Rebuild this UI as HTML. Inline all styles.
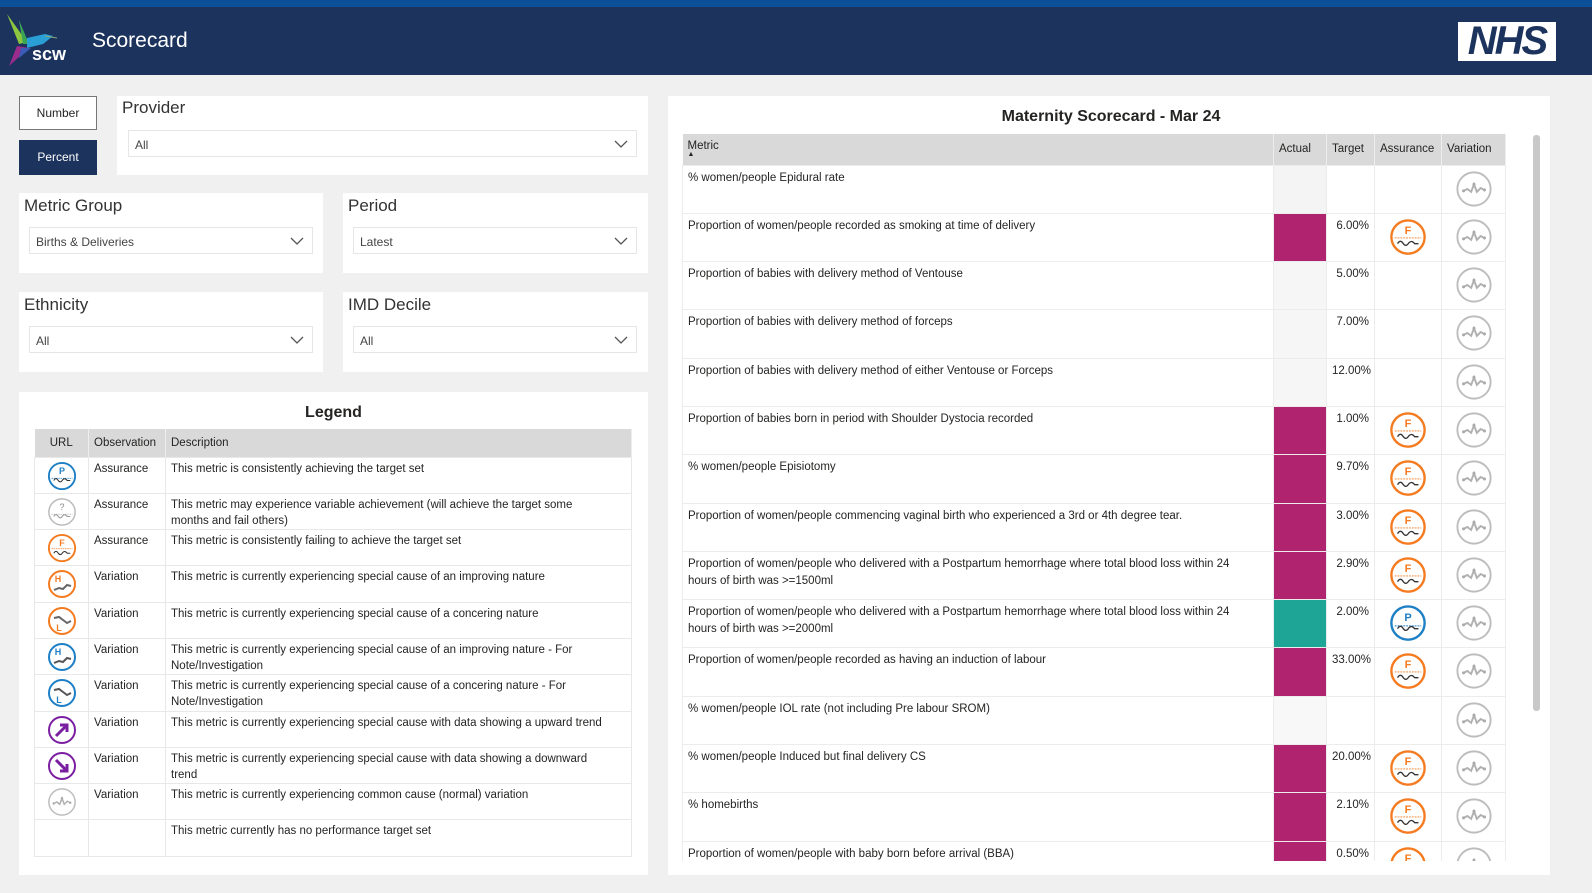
<!DOCTYPE html>
<html><head><meta charset="utf-8"><style>
*{box-sizing:border-box;margin:0;padding:0}
body{width:1592px;height:893px;background:#f0f0f0;font-family:"Liberation Sans",sans-serif;position:relative;overflow:hidden;color:#252423}
.abs{position:absolute}
.card{position:absolute;background:#fff}
.lbl{position:absolute;font-size:17px;color:#333}
.dd{position:absolute;background:#fff;border:1px solid #e6e6e6;font-size:12px;color:#444;padding:7px 6px}
.dd svg{position:absolute;right:8px;top:9px}
table{border-collapse:collapse;font-size:11.5px;table-layout:fixed}
.lg tr{height:36.3px}
.lg td{border:1px solid #e8e8e8;vertical-align:top;padding:3px 5px 0;line-height:16px;overflow:hidden}
.lg td svg{display:block;margin:0 auto}
.lg th{background:#d9d9d9;font-weight:normal;text-align:left;padding:0 5px;height:28px;border-right:1px solid #eee}
.mt tr{height:48.3px}
.mt td{border:1px solid #ececec;vertical-align:top;padding:4px 5px 0;line-height:17px;overflow:hidden}
.mt td svg{display:block;margin:0 auto}
.mt th{background:#d9d9d9;font-weight:normal;text-align:left;padding:0 5px;height:30px;border-right:1px solid #eee}
.r{text-align:right}
.c{text-align:center}
</style></head><body>
<svg width="0" height="0" style="position:absolute"><defs>
<symbol id="var" viewBox="0 0 40 40"><circle cx="20" cy="20" r="17.5" fill="#fff" stroke="#bdbdbd" stroke-width="2"/><path d="M9 22 L13 20 L17 23 L20 15 L23 23 L27 19 L31 21" fill="none" stroke="#b0b0b0" stroke-width="2"/><circle cx="9" cy="22" r="1.6" fill="#aaa"/><circle cx="20" cy="15" r="1.6" fill="#aaa"/><circle cx="31" cy="21" r="1.6" fill="#aaa"/></symbol>
<symbol id="fo" viewBox="0 0 40 40"><circle cx="20" cy="20" r="17.5" fill="#fff" stroke="#f47b20" stroke-width="2.5"/><line x1="6" y1="21" x2="34" y2="21" stroke="#f47b20" stroke-width="1" stroke-dasharray="2 1"/><path d="M9 27 q3 -5 6 0 q3 4 6 -1 q3 -3 6 1 h4" fill="none" stroke="#333" stroke-width="1.4"/></symbol>
<symbol id="pb" viewBox="0 0 40 40"><circle cx="20" cy="20" r="17.5" fill="#fff" stroke="#1d7fc5" stroke-width="2.5"/><line x1="6" y1="23" x2="34" y2="23" stroke="#1d7fc5" stroke-width="1" stroke-dasharray="2 1"/><path d="M9 26 q3 -5 6 0 q3 4 6 -1 q3 -3 6 1 h4" fill="none" stroke="#333" stroke-width="1.4"/></symbol>
<symbol id="qg" viewBox="0 0 40 40"><circle cx="20" cy="20" r="17.5" fill="#fff" stroke="#bbb" stroke-width="2"/><line x1="6" y1="23" x2="34" y2="23" stroke="#bbb" stroke-width="1" stroke-dasharray="2 1"/><path d="M9 26 q3 -5 6 0 q3 4 6 -1 q3 -3 6 1 h4" fill="none" stroke="#999" stroke-width="1.4"/></symbol>
</defs></svg>

<div class="abs" style="left:0;top:0;width:1592px;height:7px;background:#0a4f97"></div>
<div class="abs" style="left:0;top:7px;width:1592px;height:68px;background:#1c335e"></div>
<svg class="abs" style="left:5px;top:14px" width="60" height="55" viewBox="0 0 60 55"><polygon points="2,0 22,28 14,30" fill="#8cc63f"/><polygon points="14,6 24,30 18,30" fill="#3aa655"/><polygon points="22,24 40,20 48,22 38,30 22,34" fill="#2a9fd6"/><polygon points="12,32 24,34 4,52" fill="#9b2c8c"/><polygon points="16,34 26,34 14,44" fill="#3a5bb7"/><line x1="40" y1="22" x2="52" y2="24" stroke="#8a7" stroke-width="1"/></svg>
<div class="abs" style="left:32px;top:44px;color:#fff;font-size:18px;font-weight:bold">scw</div>
<div class="abs" style="left:92px;top:29px;color:#fff;font-size:21px">Scorecard</div>
<div class="abs" style="left:1458px;top:22px;width:98px;height:39px;background:#fff;"></div>
<div class="abs" style="left:1461px;top:25px;width:92px;height:33px;background:#fff;color:#1c335e;font-size:40px;font-weight:bold;font-style:italic;line-height:33px;letter-spacing:-2px;text-align:center">NHS</div>

<div class="abs" style="left:19px;top:96px;width:78px;height:34px;background:#fff;border:1px solid #777;font-size:12px;text-align:center;line-height:32px">Number</div>
<div class="abs" style="left:19px;top:140px;width:78px;height:35px;background:#1c335e;color:#fff;font-size:12px;text-align:center;line-height:35px">Percent</div>

<div class="card" style="left:117px;top:96px;width:531px;height:79px"></div>
<div class="lbl" style="left:122px;top:98px">Provider</div>
<div class="dd" style="left:128px;top:130px;width:509px;height:27px">All<svg width="14" height="8"><path d="M1 1 L7 7 L13 1" fill="none" stroke="#555" stroke-width="1.3"/></svg></div>

<div class="card" style="left:19px;top:193px;width:304px;height:80px"></div>
<div class="lbl" style="left:24px;top:196px">Metric Group</div>
<div class="dd" style="left:29px;top:227px;width:284px;height:27px">Births &amp; Deliveries<svg width="14" height="8"><path d="M1 1 L7 7 L13 1" fill="none" stroke="#555" stroke-width="1.3"/></svg></div>
<div class="card" style="left:343px;top:193px;width:305px;height:80px"></div>
<div class="lbl" style="left:348px;top:196px">Period</div>
<div class="dd" style="left:353px;top:227px;width:284px;height:27px">Latest<svg width="14" height="8"><path d="M1 1 L7 7 L13 1" fill="none" stroke="#555" stroke-width="1.3"/></svg></div>

<div class="card" style="left:19px;top:292px;width:304px;height:80px"></div>
<div class="lbl" style="left:24px;top:295px">Ethnicity</div>
<div class="dd" style="left:29px;top:326px;width:284px;height:27px">All<svg width="14" height="8"><path d="M1 1 L7 7 L13 1" fill="none" stroke="#555" stroke-width="1.3"/></svg></div>
<div class="card" style="left:343px;top:292px;width:305px;height:80px"></div>
<div class="lbl" style="left:348px;top:295px">IMD Decile</div>
<div class="dd" style="left:353px;top:326px;width:284px;height:27px">All<svg width="14" height="8"><path d="M1 1 L7 7 L13 1" fill="none" stroke="#555" stroke-width="1.3"/></svg></div>

<div class="card" style="left:19px;top:392px;width:629px;height:483px"></div>
<div class="abs" style="left:19px;top:404px;width:629px;text-align:center;font-size:16px;font-weight:bold">Legend</div>
<table class="lg abs" style="left:34px;top:429px;width:598px">
<tr style="height:28px"><th style="width:54px;text-align:center">URL</th><th style="width:77px">Observation</th><th style="padding-right:30px">Description</th></tr>
<tr><td><svg width="30" height="30"><use href="#pb"/><text x="15" y="13" font-size="9" fill="#1d7fc5" text-anchor="middle" font-weight="bold">P</text></svg></td><td>Assurance</td><td>This metric is consistently achieving the target set</td></tr>
<tr><td><svg width="30" height="30"><use href="#qg"/><text x="15" y="13" font-size="9" fill="#888" text-anchor="middle">?</text></svg></td><td>Assurance</td><td style="padding-right:28px">This metric may experience variable achievement (will achieve the target some months and fail others)</td></tr>
<tr><td><svg width="30" height="30"><use href="#fo"/><text x="15" y="13" font-size="9" fill="#f47b20" text-anchor="middle" font-weight="bold">F</text></svg></td><td>Assurance</td><td>This metric is consistently failing to achieve the target set</td></tr>
<tr><td><svg width="30" height="30"><circle cx="15" cy="15" r="13" fill="#fff" stroke="#f47b20" stroke-width="2"/><text x="11" y="13" font-size="9" fill="#f47b20" font-weight="bold" text-anchor="middle">H</text><path d="M7 21 L12 19 L16 20 L20 16 L24 17" stroke="#666" stroke-width="2" fill="none"/></svg></td><td>Variation</td><td>This metric is currently experiencing special cause of an improving nature</td></tr>
<tr><td><svg width="30" height="30"><circle cx="15" cy="15" r="13" fill="#fff" stroke="#f47b20" stroke-width="2"/><text x="12" y="25" font-size="9" fill="#f47b20" font-weight="bold" text-anchor="middle">L</text><path d="M7 12 L12 11 L16 14 L20 17 L24 15" stroke="#666" stroke-width="2" fill="none"/></svg></td><td>Variation</td><td>This metric is currently experiencing special cause of a concering nature</td></tr>
<tr><td><svg width="30" height="30"><circle cx="15" cy="15" r="13" fill="#fff" stroke="#1d7fc5" stroke-width="2"/><text x="11" y="13" font-size="9" fill="#1d7fc5" font-weight="bold" text-anchor="middle">H</text><path d="M7 21 L12 19 L16 20 L20 16 L24 17" stroke="#555" stroke-width="2" fill="none"/></svg></td><td>Variation</td><td>This metric is currently experiencing special cause of an improving nature - For Note/Investigation</td></tr>
<tr><td><svg width="30" height="30"><circle cx="15" cy="15" r="13" fill="#fff" stroke="#1d7fc5" stroke-width="2"/><text x="12" y="25" font-size="9" fill="#1d7fc5" font-weight="bold" text-anchor="middle">L</text><path d="M7 12 L12 11 L16 14 L20 17 L24 15" stroke="#555" stroke-width="2" fill="none"/></svg></td><td>Variation</td><td>This metric is currently experiencing special cause of a concering nature - For Note/Investigation</td></tr>
<tr><td><svg width="30" height="30"><circle cx="15" cy="15" r="13" fill="#fff" stroke="#7b1fa2" stroke-width="2"/><path d="M9 21 L20 10 M13 10 H20 V17" stroke="#7b1fa2" stroke-width="3" fill="none"/></svg></td><td>Variation</td><td>This metric is currently experiencing special cause with data showing a upward trend</td></tr>
<tr><td><svg width="30" height="30"><circle cx="15" cy="15" r="13" fill="#fff" stroke="#7b1fa2" stroke-width="2"/><path d="M9 9 L20 20 M13 20 H20 V13" stroke="#7b1fa2" stroke-width="3" fill="none"/></svg></td><td>Variation</td><td style="padding-right:28px">This metric is currently experiencing special cause with data showing a downward trend</td></tr>
<tr><td><svg width="30" height="30"><use href="#var"/></svg></td><td>Variation</td><td>This metric is currently experiencing common cause (normal) variation</td></tr>
<tr><td></td><td></td><td>This metric currently has no performance target set</td></tr>
</table>

<div class="card" style="left:668px;top:96px;width:882px;height:779px"></div>
<div class="abs" style="left:668px;top:108px;width:886px;text-align:center;font-size:16px;font-weight:bold">Maternity Scorecard - Mar 24</div>
<div class="abs" style="left:1533px;top:135px;width:7px;height:576px;background:#c8c8c8;border-radius:3px"></div>
<div class="abs" style="left:682px;top:134px;width:825px;height:727px;overflow:hidden">
<table class="mt" style="width:824px">
<tr style="height:31px"><th style="width:591px">Metric<div style="font-size:7px;line-height:6px">▲</div></th><th class="r" style="width:53px">Actual</th><th class="r" style="width:48px">Target</th><th style="width:67px">Assurance</th><th>Variation</th></tr>
<tr><td>% women/people Epidural rate</td><td style="background:#f4f4f4"></td><td class="r"></td><td></td><td><svg width="38" height="38"><use href="#var"/></svg></td></tr>
<tr><td>Proportion of women/people recorded as smoking at time of delivery</td><td style="background:#b0246f"></td><td class="r">6.00%</td><td><svg width="38" height="38"><use href="#fo"/><text x="19" y="16" font-size="11" fill="#f47b20" text-anchor="middle" font-weight="bold">F</text></svg></td><td><svg width="38" height="38"><use href="#var"/></svg></td></tr>
<tr><td>Proportion of babies with delivery method of Ventouse</td><td style="background:#f6f6f6"></td><td class="r">5.00%</td><td></td><td><svg width="38" height="38"><use href="#var"/></svg></td></tr>
<tr><td>Proportion of babies with delivery method of forceps</td><td style="background:#f6f6f6"></td><td class="r">7.00%</td><td></td><td><svg width="38" height="38"><use href="#var"/></svg></td></tr>
<tr><td>Proportion of babies with delivery method of either Ventouse or Forceps</td><td style="background:#f6f6f6"></td><td class="r">12.00%</td><td></td><td><svg width="38" height="38"><use href="#var"/></svg></td></tr>
<tr><td>Proportion of babies born in period with Shoulder Dystocia recorded</td><td style="background:#b0246f"></td><td class="r">1.00%</td><td><svg width="38" height="38"><use href="#fo"/><text x="19" y="16" font-size="11" fill="#f47b20" text-anchor="middle" font-weight="bold">F</text></svg></td><td><svg width="38" height="38"><use href="#var"/></svg></td></tr>
<tr><td>% women/people Episiotomy</td><td style="background:#b0246f"></td><td class="r">9.70%</td><td><svg width="38" height="38"><use href="#fo"/><text x="19" y="16" font-size="11" fill="#f47b20" text-anchor="middle" font-weight="bold">F</text></svg></td><td><svg width="38" height="38"><use href="#var"/></svg></td></tr>
<tr><td>Proportion of women/people commencing vaginal birth who experienced a 3rd or 4th degree tear.</td><td style="background:#b0246f"></td><td class="r">3.00%</td><td><svg width="38" height="38"><use href="#fo"/><text x="19" y="16" font-size="11" fill="#f47b20" text-anchor="middle" font-weight="bold">F</text></svg></td><td><svg width="38" height="38"><use href="#var"/></svg></td></tr>
<tr><td style="padding-right:20px">Proportion of women/people who delivered with a Postpartum hemorrhage where total blood loss within 24 hours of birth was &gt;=1500ml</td><td style="background:#b0246f"></td><td class="r">2.90%</td><td><svg width="38" height="38"><use href="#fo"/><text x="19" y="16" font-size="11" fill="#f47b20" text-anchor="middle" font-weight="bold">F</text></svg></td><td><svg width="38" height="38"><use href="#var"/></svg></td></tr>
<tr><td style="padding-right:20px">Proportion of women/people who delivered with a Postpartum hemorrhage where total blood loss within 24 hours of birth was &gt;=2000ml</td><td style="background:#1fa596"></td><td class="r">2.00%</td><td><svg width="38" height="38"><use href="#pb"/><text x="19" y="17" font-size="11" fill="#1d7fc5" text-anchor="middle" font-weight="bold">P</text></svg></td><td><svg width="38" height="38"><use href="#var"/></svg></td></tr>
<tr><td>Proportion of women/people recorded as having an induction of labour</td><td style="background:#b0246f"></td><td class="r">33.00%</td><td><svg width="38" height="38"><use href="#fo"/><text x="19" y="16" font-size="11" fill="#f47b20" text-anchor="middle" font-weight="bold">F</text></svg></td><td><svg width="38" height="38"><use href="#var"/></svg></td></tr>
<tr><td>% women/people IOL rate (not including Pre labour SROM)</td><td style="background:#f8f8f8"></td><td class="r"></td><td></td><td><svg width="38" height="38"><use href="#var"/></svg></td></tr>
<tr><td>% women/people Induced but final delivery CS</td><td style="background:#b0246f"></td><td class="r">20.00%</td><td><svg width="38" height="38"><use href="#fo"/><text x="19" y="16" font-size="11" fill="#f47b20" text-anchor="middle" font-weight="bold">F</text></svg></td><td><svg width="38" height="38"><use href="#var"/></svg></td></tr>
<tr><td>% homebirths</td><td style="background:#b0246f"></td><td class="r">2.10%</td><td><svg width="38" height="38"><use href="#fo"/><text x="19" y="16" font-size="11" fill="#f47b20" text-anchor="middle" font-weight="bold">F</text></svg></td><td><svg width="38" height="38"><use href="#var"/></svg></td></tr>
<tr><td>Proportion of women/people with baby born before arrival (BBA)</td><td style="background:#b0246f"></td><td class="r">0.50%</td><td><svg width="38" height="38"><use href="#fo"/><text x="19" y="16" font-size="11" fill="#f47b20" text-anchor="middle" font-weight="bold">F</text></svg></td><td><svg width="38" height="38"><use href="#var"/></svg></td></tr>
</table>
</div>
</body></html>
